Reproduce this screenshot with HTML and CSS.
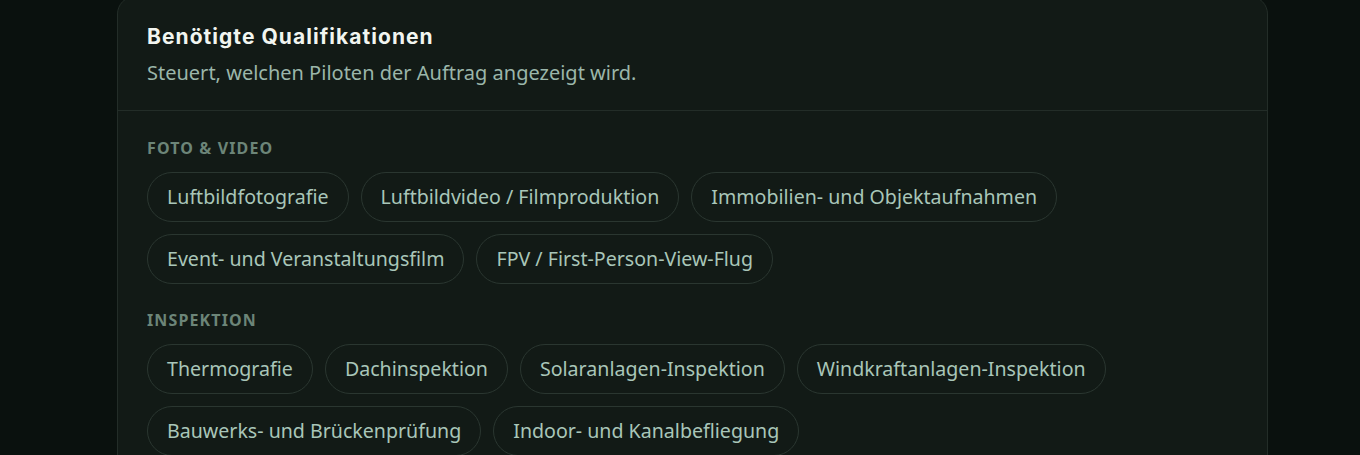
FILE: index.html
```html
<!DOCTYPE html>
<html lang="de">
<head>
    <meta charset="UTF-8">
    <meta name="viewport" content="width=device-width, initial-scale=1.0">
    <title>Benötigte Qualifikationen</title>
    <link rel="stylesheet" href="styles.css">
</head>
<body>
    <div class="page">
        <section class="card">
            <div class="card-header">
                <h2 class="card-title">Benötigte Qualifikationen</h2>
                <p class="card-subtitle">Steuert, welchen Piloten der Auftrag angezeigt wird.</p>
            </div>

            <div class="card-body">
                <div class="group">
                    <h3 class="group-label">Foto &amp; Video</h3>
                    <div class="chips">
                        <button class="chip">Luftbildfotografie</button>
                        <button class="chip">Luftbildvideo / Filmproduktion</button>
                        <button class="chip">Immobilien- und Objektaufnahmen</button>
                        <button class="chip">Event- und Veranstaltungsfilm</button>
                        <button class="chip">FPV / First-Person-View-Flug</button>
                    </div>
                </div>

                <div class="group">
                    <h3 class="group-label">Inspektion</h3>
                    <div class="chips">
                        <button class="chip">Thermografie</button>
                        <button class="chip">Dachinspektion</button>
                        <button class="chip">Solaranlagen-Inspektion</button>
                        <button class="chip">Windkraftanlagen-Inspektion</button>
                        <button class="chip">Bauwerks- und Brückenprüfung</button>
                        <button class="chip">Indoor- und Kanalbefliegung</button>
                    </div>
                </div>
            </div>
        </section>
    </div>
</body>
</html>
```

FILE: styles.css
```css
* {
    margin: 0;
    padding: 0;
    box-sizing: border-box;
}

body {
    font-family: 'Noto Sans', 'DejaVu Sans', sans-serif;
    background: #0a110e;
    color: #a9c6b9;
    height: 455px;
    overflow: hidden;
}

.page {
    padding-left: 117px;
}

.card {
    width: 1151px;
    margin-top: -4px;
    background: #121a16;
    border: 1px solid #232d28;
    border-radius: 18px;
}

.card-header {
    padding: 26px 29px 23px;
    border-bottom: 1px solid #232d28;
}

.card-title {
    font-family: Inter, 'Noto Sans', sans-serif;
    font-size: 21px;
    font-weight: 700;
    line-height: 28px;
    color: #f1f5f0;
    letter-spacing: 0.05em;
}

.card-subtitle {
    margin-top: 8px;
    font-size: 20px;
    line-height: 28px;
    color: #9bb6aa;
}

.card-body {
    padding: 25px 29px 24px;
    display: flex;
    flex-direction: column;
    gap: 24px;
}

.group-label {
    font-size: 16px;
    font-weight: 700;
    line-height: 24px;
    letter-spacing: 0.07em;
    text-transform: uppercase;
    color: #6c8578;
    margin-bottom: 12px;
}

.chips {
    display: flex;
    flex-wrap: wrap;
    gap: 12px;
}

.chip {
    font-family: inherit;
    font-size: 19.6px;
    line-height: 24px;
    padding: 12px 19px;
    color: #a9c6b9;
    background: transparent;
    border: 1px solid #2a3630;
    border-radius: 999px;
    cursor: pointer;
}
```
